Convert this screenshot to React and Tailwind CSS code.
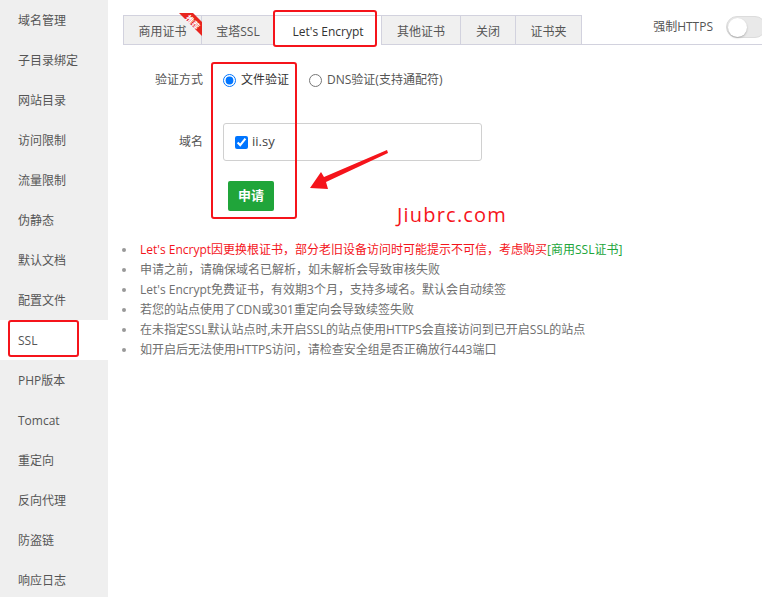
export default function App() {
  const side = ["域名管理", "子目录绑定", "网站目录", "访问限制", "流量限制", "伪静态", "默认文档", "配置文件", "SSL", "PHP版本", "Tomcat", "重定向", "反向代理", "防盗链", "响应日志"];
  const tabs = [
    { t: "商用证书", w: "w-[79px]" },
    { t: "宝塔SSL", w: "w-[73px]" },
    { t: "Let's Encrypt", w: "w-[107px]", active: true },
    { t: "其他证书", w: "w-[79px]" },
    { t: "关闭", w: "w-[55px]" },
    { t: "证书夹", w: "w-[66px]" },
  ];
  const tips = [
    "申请之前，请确保域名已解析，如未解析会导致审核失败",
    "Let's Encrypt免费证书，有效期3个月，支持多域名。默认会自动续签",
    "若您的站点使用了CDN或301重定向会导致续签失败",
    "在未指定SSL默认站点时,未开启SSL的站点使用HTTPS会直接访问到已开启SSL的站点",
    "如开启后无法使用HTTPS访问，请检查安全组是否正确放行443端口",
  ];
  return (
    <div className="relative flex h-[597px] w-[762px] overflow-hidden bg-white text-[12px] font-['Open_Sans','Noto_Sans_CJK_SC',sans-serif]">
      <div className="w-[108px] shrink-0 bg-[#efefef]">
        {side.map((s) => (
          <div
            key={s}
            className={
              s === "SSL"
                ? "relative flex h-10 items-center bg-white pl-[18px] pt-[2px] text-[#555]"
                : "relative flex h-10 items-center pl-[18px] pt-[2px] text-[#555]"
            }
          >
            {s}
            {s === "SSL" && (
              <div className="absolute left-2 top-0 h-[37px] w-[71px] rounded-[3px] border-[2.5px] border-[#f5141b]" />
            )}
          </div>
        ))}
      </div>

      <div className="flex-1 pl-[15px] pt-[15px]">
        <div className="flex h-[30px] border-b border-[#d2d2de]">
          {tabs.map((tab, i) => (
            <div
              key={tab.t}
              className={
                "relative flex items-center justify-center border-t border-r border-[#d2d2de] pt-[3px] " +
                tab.w +
                (i === 0 ? " border-l" : "") +
                (tab.active ? " -mb-px h-[30px] bg-white text-[#333]" : " bg-[#f0f0f0] text-[#555]")
              }
            >
              {tab.t}
              {i === 0 && (
                <svg className="absolute left-[52px] top-[-4px]" width="30" height="28" viewBox="0 0 30 28">
                  <polygon points="3,1 17,1 28,12 28,26" fill="#e8251f" />
                  <polygon points="28,26 28,22 30,24" fill="#9a1410" />
                  <text
                    x="16"
                    y="13"
                    fill="#fff"
                    fontSize="8"
                    fontWeight="bold"
                    textAnchor="middle"
                    transform="rotate(45 16 11)"
                  >
                    推荐
                  </text>
                </svg>
              )}
            </div>
          ))}
          <div className="ml-auto -mt-[5px] mr-[-4px] flex items-center">
            <span className="text-[#555]">强制HTTPS</span>
            <div className="ml-[13px] flex h-[22px] w-[40px] items-center rounded-full border border-[#dcdcdc] bg-[#e9e9e9] pl-px">
              <div className="h-[19px] w-[19px] rounded-full bg-white shadow-[0_1px_2px_rgba(0,0,0,0.25)]" />
            </div>
          </div>
        </div>

        <div className="mt-[25px] flex h-5 items-center">
          <div className="w-[80px] text-right text-[#555]">验证方式</div>
          <div className="ml-5 flex items-center">
            <input type="radio" name="v" defaultChecked className="h-[13px] w-[13px]" />
            <span className="ml-[5px] text-[#333]">文件验证</span>
            <input type="radio" name="v" className="ml-[20px] h-[13px] w-[13px]" />
            <span className="ml-[5px] text-[#555]">DNS验证(支持通配符)</span>
          </div>
        </div>

        <div className="mt-[33px] flex items-center">
          <div className="w-[80px] text-right text-[#555]">域名</div>
          <div className="ml-5 flex h-[38px] w-[259px] items-center rounded-[3px] border border-[#d0d0d0] pl-[11px]">
            <input type="checkbox" defaultChecked className="h-[13px] w-[13px]" />
            <span className="ml-[4px] text-[13px] text-[#444]">ii.sy</span>
          </div>
        </div>

        <div className="mt-[20px] ml-[105px] flex h-[30px] w-[46px] items-center justify-center rounded-[2px] bg-[#20a53a] text-[13px] font-bold text-white">
          申请
        </div>

        <ul className="mt-[29px]">
          <li className="flex h-5 items-center">
            <span className="ml-[-1px] h-1 w-1 rounded-full bg-[#999]" />
            <span className="ml-[14px] text-[#f4141b]">
              Let's Encrypt因更换根证书，部分老旧设备访问时可能提示不可信，考虑购买
              <span className="text-[#20a53a]">[商用SSL证书]</span>
            </span>
          </li>
          {tips.map((t) => (
            <li key={t} className="flex h-5 items-center">
              <span className="ml-[-1px] h-1 w-1 rounded-full bg-[#999]" />
              <span className="ml-[14px] text-[#6f6f6f]">{t}</span>
            </li>
          ))}
        </ul>
      </div>

      <div className="pointer-events-none absolute left-[211px] top-[62px] h-[157px] w-[86px] rounded-[3px] border-[2.5px] border-[#f5141b]" />
      <div className="pointer-events-none absolute left-[273px] top-[10px] h-[37px] w-[104px] rounded-[3px] border-[2.5px] border-[#f5141b]" />
      <svg className="pointer-events-none absolute left-0 top-0" width="762" height="597">
        <polygon points="310,188 321,172 324,177 387,150 388,153 326,182 328,189" fill="#f5141b" />
      </svg>
      <div className="pointer-events-none absolute left-[397px] top-[201px] text-[20px] leading-[28px] tracking-[1.2px] text-[#f5141b]">
        Jiubrc.com
      </div>
    </div>
  );
}
